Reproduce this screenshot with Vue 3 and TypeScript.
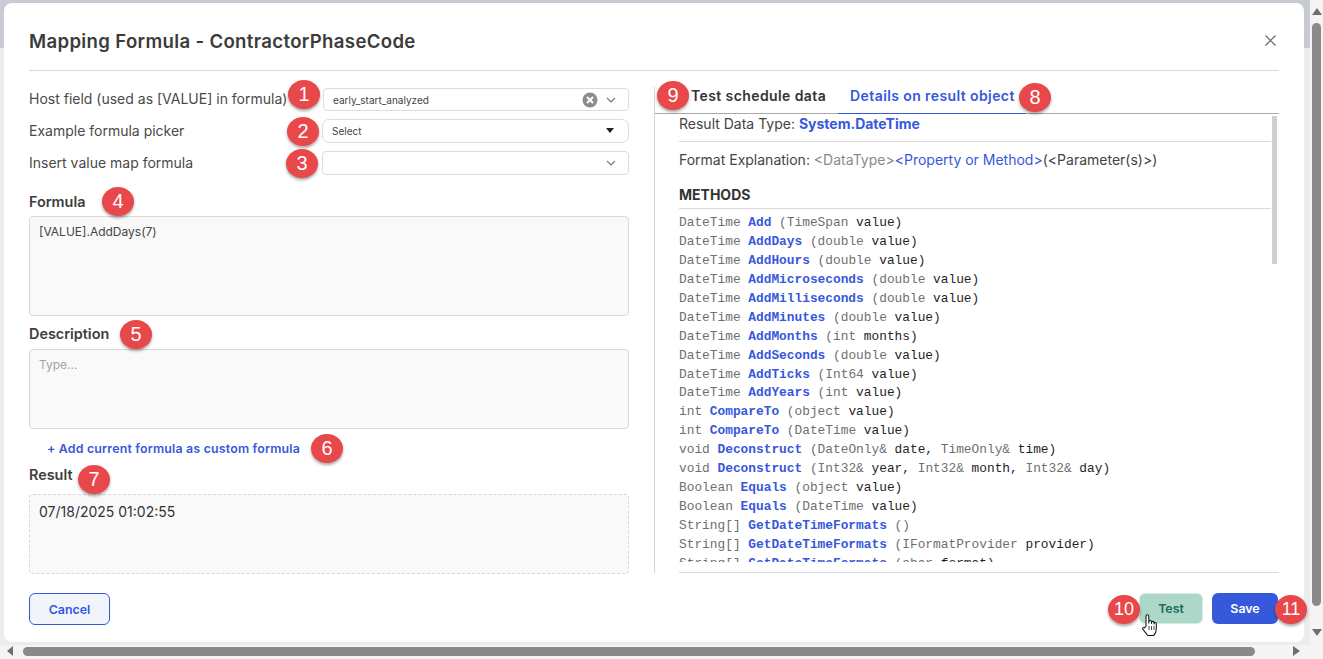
<script setup lang="ts">
interface Part { t: string; c: 'ty' | 'ar' }
const methods: [string, string, string][] = [
  ['DateTime', 'Add', '(TimeSpan| value)'],
  ['DateTime', 'AddDays', '(double| value)'],
  ['DateTime', 'AddHours', '(double| value)'],
  ['DateTime', 'AddMicroseconds', '(double| value)'],
  ['DateTime', 'AddMilliseconds', '(double| value)'],
  ['DateTime', 'AddMinutes', '(double| value)'],
  ['DateTime', 'AddMonths', '(int| months)'],
  ['DateTime', 'AddSeconds', '(double| value)'],
  ['DateTime', 'AddTicks', '(Int64| value)'],
  ['DateTime', 'AddYears', '(int| value)'],
  ['int', 'CompareTo', '(object| value)'],
  ['int', 'CompareTo', '(DateTime| value)'],
  ['void', 'Deconstruct', '(DateOnly&| date,| TimeOnly&| time)'],
  ['void', 'Deconstruct', '(Int32&| year,| Int32&| month,| Int32&| day)'],
  ['Boolean', 'Equals', '(object| value)'],
  ['Boolean', 'Equals', '(DateTime| value)'],
  ['String[]', 'GetDateTimeFormats', '()'],
  ['String[]', 'GetDateTimeFormats', '(IFormatProvider| provider)'],
  ['String[]', 'GetDateTimeFormats', '(char| format)']
]
function split(s: string): Part[] {
  return s.split('|').map((t, i) => ({ t, c: i % 2 === 0 ? 'ty' : 'ar' }))
}
const badges = [
  { n: '1', x: 304, y: 94 },
  { n: '2', x: 303, y: 131 },
  { n: '3', x: 302, y: 163 },
  { n: '4', x: 118, y: 201 },
  { n: '5', x: 136, y: 334 },
  { n: '6', x: 327, y: 448 },
  { n: '7', x: 94, y: 479 },
  { n: '8', x: 1035, y: 97 },
  { n: '9', x: 673, y: 95 },
  { n: '10', x: 1124, y: 609 },
  { n: '11', x: 1291, y: 609 }
]
</script>

<template>
  <div class="page">
    <div class="stage">
      <div class="backdrop-top"></div>
      <section class="modal">
        <header class="head">
          <h1>Mapping Formula - ContractorPhaseCode</h1>
          <svg class="close" width="11" height="11" viewBox="0 0 11 11"><path d="M.5.500l10 10M10.500.500l-10 10" stroke="#5f6368" stroke-width="1.200" fill="none" /></svg>
        </header>
        <div class="body">
          <div class="left">
            <div class="row r1">
              <label>Host field (used as [VALUE] in formula)</label>
              <div class="select first">
                <span class="val">early_start_analyzed</span>
                <svg class="clear" width="16" height="16" viewBox="0 0 16 16"><circle cx="8" cy="8" r="7.500" fill="#8c8c8c" /><path d="M5 5l6 6M11 5l-6 6" stroke="#fff" stroke-width="2" /></svg>
                <svg class="chev" width="10" height="6" viewBox="0 0 10 6"><path d="M1 1l4 4 4-4" stroke="#777" stroke-width="1.100" fill="none" /></svg>
              </div>
            </div>
            <div class="row r2">
              <label>Example formula picker</label>
              <div class="select pill">
                <span class="val">Select</span>
                <svg class="caret" width="8" height="5" viewBox="0 0 8 5"><path d="M0 0h8L4 5z" fill="#222" /></svg>
              </div>
            </div>
            <div class="row r3">
              <label>Insert value map formula</label>
              <div class="select">
                <span class="val"></span>
                <svg class="chev" width="10" height="6" viewBox="0 0 10 6"><path d="M1 1l4 4 4-4" stroke="#777" stroke-width="1.100" fill="none" /></svg>
              </div>
            </div>
            <h2 class="sect formula">Formula</h2>
            <div class="area h100"><span class="code">[VALUE].AddDays(7)</span></div>
            <h2 class="sect desc">Description</h2>
            <div class="area h80 descbox"><span class="ph">Type...</span></div>
            <a class="add">+ Add current formula as custom formula</a>
            <h2 class="sect res">Result</h2>
            <div class="area h80 dashed"><span class="result">07/18/2025 01:02:55</span></div>
          </div>
          <div class="right">
            <nav class="tabs">
              <span class="tab">Test schedule data</span>
              <span class="tab active">Details on result object</span>
            </nav>
            <div class="panel">
              <div class="scroll">
                <p class="dtype">Result Data Type: <b>System.DateTime</b></p>
                <p class="fmt">Format Explanation: <span class="g">&lt;DataType&gt;</span><span class="b">&lt;Property or Method&gt;</span>(&lt;Parameter(s)&gt;)</p>
                <h3>METHODS</h3>
                <ul>
                  <li v-for="(m, i) in methods" :key="i"><span class="ty">{{ m[0] + ' ' }}</span><b>{{ m[1] }}</b><span>{{ ' ' }}</span><span v-for="(p, j) in split(m[2])" :key="j" :class="p.c">{{ p.t }}</span></li>
                </ul>
              </div>
              <div class="rule"></div>
              <div class="vbar"></div>
            </div>
          </div>
        </div>
        <footer class="foot">
          <button class="btn cancel">Cancel</button>
          <div class="actions">
            <button class="btn test">Test</button>
            <button class="btn save">Save</button>
          </div>
        </footer>
      </section>
    </div>
    <div class="sb-v">
      <svg width="10" height="7" viewBox="0 0 10 7"><path d="M0 7L5 0l5 7z" fill="#6e6e6e" /></svg>
      <i></i>
      <svg width="10" height="7" viewBox="0 0 10 7"><path d="M0 0l5 7 5-7z" fill="#6e6e6e" /></svg>
    </div>
    <div class="sb-h">
      <svg width="6" height="10" viewBox="0 0 6 10"><path d="M6 0L0 5l6 5z" fill="#6e6e6e" /></svg>
      <i></i>
      <svg width="7" height="10" viewBox="0 0 7 10"><path d="M0 0l7 5-7 5z" fill="#6e6e6e" /></svg>
    </div>
    <div class="corner"></div>

    <span v-for="b in badges" :key="b.n" class="badge" :class="{ two: b.n.length > 1 }" :style="{ left: b.x - 16 + 'px', top: b.y - 14 + 'px' }">{{ b.n }}</span>

    <svg class="cursor" width="18" height="24" viewBox="0 0 18 24">
      <path d="M5 13V3.200a1.400 1.400 0 0 1 2.800 0V10l.1-1.300a1.300 1.300 0 0 1 2.600.2V10.500l.1-1a1.200 1.200 0 0 1 2.400.2v1.300l.1-.5a1.100 1.100 0 0 1 2.200.2V16c0 2.800-1.600 5.500-2.600 6.500H6.800C5.500 21 3.600 18.500 1.800 16.200c-.9-1.200.8-2.700 2-1.400z" fill="#fff" stroke="#1a1a1a" stroke-width="1.100" stroke-linejoin="round" />
      <path d="M8 13v4M10.500 13v4M13 13v4" stroke="#1a1a1a" stroke-width=".8" fill="none" />
    </svg>
  </div>
</template>

<style>
html, body { margin: 0; padding: 0; overflow: hidden; }
</style>

<style scoped>
.page {
  position: relative;
  width: 1323px;
  height: 659px;
  display: grid;
  grid-template-columns: 1310px 13px;
  grid-template-rows: 645px 14px;
  background: #f6f6f6;
  overflow: hidden;
  font-family: Inter, "Liberation Sans", sans-serif;
  color: #3d3d3d;
}
.stage {
  position: relative;
  background: #ececec;
  padding: 3px 6px 3px 4px;
  box-sizing: border-box;
  overflow: hidden;
}
.backdrop-top {
  position: absolute;
  inset: 0 0 auto 0;
  height: 48px;
  background: #c8cbd3;
}
.modal {
  position: relative;
  height: 639px;
  background: #fff;
  border-radius: 8px;
  box-sizing: border-box;
  padding: 0 25px;
  display: flex;
  flex-direction: column;
}
.head {
  height: 68px;
  display: flex;
  align-items: center;
  justify-content: space-between;
  border-bottom: 1px solid #d9d9d9;
  box-sizing: border-box;
  padding: 8px 3px 0 0;
}
h1 {
  margin: 0;
  font: 600 18.600px Inter, sans-serif;
  color: #3b3b3b;
  letter-spacing: .33px;
}
.body {
  display: flex;
  height: 503px;
}
.left {
  width: 600px;
  flex: none;
  display: flex;
  flex-direction: column;
}
.row {
  display: flex;
  align-items: center;
  justify-content: space-between;
  height: 32px;
}
.r1 { margin-top: 12px; }
.row label {
  font-size: 14px;
  line-height: 18px;
  color: #4a4a4a;
}
.select {
  width: 307px;
  height: 24px;
  border: 1px solid #dcdcdc;
  border-radius: 4px;
  box-sizing: border-box;
  display: flex;
  align-items: center;
  padding: 0 12px 0 9px;
  background: #fff;
  gap: 8px;
}
.select.first { width: 306px; height: 23px; margin-top: 1px; }
.select.pill { border-radius: 7px; padding-right: 14px; }
.pill .val { padding-bottom: 1px; }
.pill .caret { margin-bottom: 1px; }
.val {
  flex: 1;
  font-size: 10px;
  color: #444;
}
.sect {
  margin: 0;
  font: 600 14.400px/20px Inter, sans-serif;
  color: #3d3d3d;
}
.formula { margin-top: 13px; }
.desc { margin-top: 8px; }
.res { margin-top: 7px; }
.area {
  margin-top: 4px;
  background: #f9f9f9;
  border: 1px solid #d9d9d9;
  border-radius: 4px;
  box-sizing: border-box;
  padding: 7px 9px;
  font-size: 12px;
}
.h100 { height: 100px; }
.h80 { height: 80px; }
.descbox { margin-top: 5px; }
.dashed { border-style: dashed; margin-top: 9px; padding-top: 8px; }
.code { color: #444; }
.ph { color: #a3a3a3; }
.result { font-size: 14px; color: #333; }
.add {
  margin: 11px 0 0 18px;
  font: 600 12.400px/18px Inter, sans-serif;
  letter-spacing: .18px;
  color: #3757dd;
}
.right {
  flex: 1;
  margin-left: 25px;
  border-left: 1px solid #d6d6d6;
  height: 486px;
  margin-top: 16px;
  display: flex;
  flex-direction: column;
}
.tabs {
  height: 27px;
  display: flex;
  border-bottom: 1px solid #a9a9a9;
  box-sizing: border-box;
  padding-left: 36px;
}
.tab {
  font: 600 14px/18px Inter, sans-serif;
  letter-spacing: .4px;
  color: #333;
  height: 26px;
  box-sizing: border-box;
}
.tab.active {
  margin-left: 12px;
  padding: 0 11px 0 12px;
  color: #3757dd;
  height: 27px;
  border-bottom: 1px solid #3757dd;
}
.panel {
  flex: 1;
  min-height: 0;
  padding-left: 24px;
  display: flex;
  flex-direction: column;
  position: relative;
}
.scroll {
  width: 592px;
  height: 448px;
  flex: none;
  overflow: hidden;
  font-size: 14px;
  color: #444;
}
.scroll p { margin: 0; }
.dtype {
  height: 27px;
  line-height: 20px;
  border-bottom: 1px solid #d9d9d9;
}
.dtype b {
  color: #3757dd;
  font-weight: 700;
}
.fmt {
  line-height: 20px;
  padding-top: 8px;
}
.g { color: #8a8a8a; }
.b { color: #3757dd; }
h3 {
  margin: 16px 0 0;
  font-size: 14px;
  font-weight: 700;
  line-height: 18px;
  padding-bottom: 4px;
  color: #333;
  border-bottom: 1px solid #d9d9d9;
}
ul {
  list-style: none;
  margin: 5px 0 0;
  padding: 0;
  font: 12.830px/18.940px "Liberation Mono", monospace;
  white-space: pre;
}
ul b { color: #3757dd; font-weight: 700; }
.ty { color: #6f6f6f; }
.ar { color: #1f1f1f; }
.rule {
  margin-top: 10px;
  border-top: 1px solid #d9d9d9;
}
.vbar {
  position: absolute;
  left: 617px;
  top: 2px;
  width: 5px;
  height: 148px;
  background: #cfcfcf;
}
.foot {
  flex: 1;
  display: flex;
  align-items: flex-start;
  justify-content: space-between;
  padding-top: 19px;
}
.actions { display: flex; gap: 9px; }
.btn {
  height: 31px;
  border-radius: 6px;
  font: 600 12.400px Inter, sans-serif;
  box-sizing: border-box;
  padding: 0;
  border: 1px solid transparent;
}
.cancel {
  width: 81px;
  height: 32px;
  background: #f2f4fb;
  border-color: #3757dd;
  color: #3757dd;
}
.test {
  width: 64px;
  background: #acd7c9;
  color: #1f6a5c;
  border-color: #d5ebe3;
}
.save {
  width: 66px;
  background: #3659dc;
  color: #fff;
  margin-right: 1px;
}
.sb-v {
  background: #f4f4f4;
  display: flex;
  flex-direction: column;
  align-items: center;
  padding: 8px 0 9px;
  box-sizing: border-box;
  height: 645px;
}
.sb-v i {
  display: block;
  width: 9px;
  flex: 1;
  margin: 8px 0 23px;
  background: #8a8a8a;
  border-radius: 5px;
}
.sb-h {
  background: #f4f4f4;
  display: flex;
  align-items: center;
  padding: 0 10px 2px 7px;
  box-sizing: border-box;
}
.sb-h i {
  display: block;
  height: 9px;
  flex: 1;
  margin: 0 38px 0 10px;
  background: #8a8a8a;
  border-radius: 5px;
}
.corner { background: #f4f4f4; }
.badge {
  position: absolute;
  width: 32px;
  height: 29px;
  display: flex;
  align-items: center;
  justify-content: center;
  border-radius: 50%;
  background: #e8484a;
  color: #fff;
  font: 400 20px "Liberation Sans", sans-serif;
  box-shadow: 0 2px 3px rgba(0, 0, 0, .35);
}
.badge.two { font-size: 18px; }
.cursor {
  position: absolute;
  left: 1141px;
  top: 613px;
}
</style>
